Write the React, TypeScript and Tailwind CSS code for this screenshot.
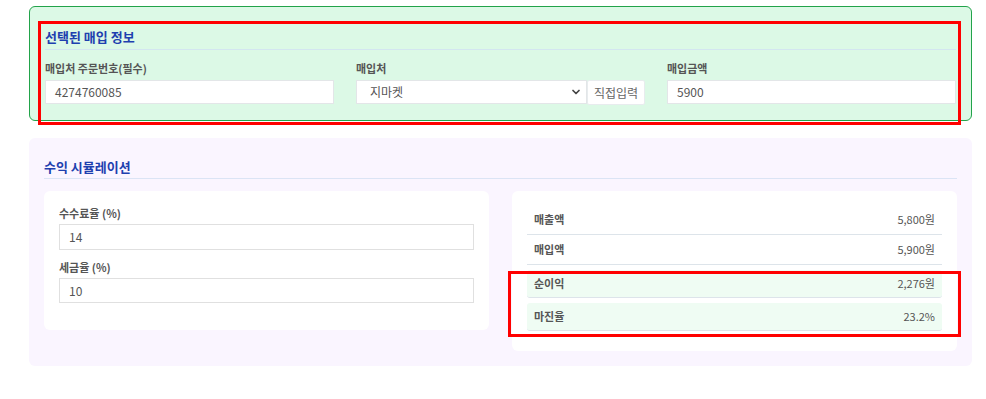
import React from 'react'

const font = { fontFamily: '"Noto Sans CJK KR", "Noto Sans", sans-serif' }

const Field = ({ label, value }: { label: string; value: string }) => (
  <div className="flex flex-col">
    <label className="text-[11px] font-bold text-[#555] leading-[14px] mb-[5px]">{label}</label>
    <div className="h-[24px] bg-white border border-[#e3e6e8] flex items-center pl-[9px] text-[12px] text-[#555]">
      {value}
    </div>
  </div>
)

const Row = ({ label, value, hl }: { label: string; value: string; hl?: boolean }) => (
  <div
    className={
      hl
        ? 'mt-[5px] h-[28px] flex items-center justify-between px-[7px] bg-[#effcf3] rounded-[3px] border-b border-[#dde4ea]'
        : 'h-[30px] flex items-center justify-between px-[7px] border-b border-[#dde4ea]'
    }
  >
    <span className="text-[11px] font-bold text-[#555]">{label}</span>
    <span className="text-[11px] text-[#555]">{value}</span>
  </div>
)

export default function App() {
  return (
    <div className="relative bg-white w-[986px] h-[399px]" style={font}>
      <div className="pt-[6px] pl-[29px] w-[972px]">
        {/* 선택된 매입 정보 */}
        <div className="bg-[#dcf9e6] border border-[#22a34a] rounded-[6px] px-[15px] pt-[20px] pb-[16px]">
          <h2 className="text-[13px] font-bold text-[#1e40af] leading-[20px] pb-[2px] border-b border-[#d3e6f0]">
            선택된 매입 정보
          </h2>
          <div className="grid grid-cols-3 gap-[22px] mt-[11px]">
            <Field label="매입처 주문번호(필수)" value="4274760085" />
            <div className="flex flex-col">
              <label className="text-[11px] font-bold text-[#555] leading-[14px] mb-[5px]">매입처</label>
              <div className="flex h-[24px]">
                <div className="flex-1 bg-white border border-[#e3e6e8] flex items-center justify-between pl-[13px] pr-[4px] text-[12px] text-[#555]">
                  <span>지마켓</span>
                  <svg width="12" height="12" viewBox="0 0 24 24" fill="none" stroke="#444" strokeWidth="3.5" strokeLinecap="round" strokeLinejoin="round">
                    <path d="M6 9l6 6 6-6" />
                  </svg>
                </div>
                <button className="w-[58px] h-[25px] bg-white border border-[#e8ecee] rounded-[2px] text-[12px] text-[#666]">
                  직접입력
                </button>
              </div>
            </div>
            <Field label="매입금액" value="5900" />
          </div>
        </div>

        {/* 수익 시뮬레이션 */}
        <div className="mt-[17px] bg-[#faf5ff] rounded-[6px] px-[15px] pt-[20px] pb-[15px]">
          <h2 className="text-[13px] font-bold text-[#1e40af] leading-[18px] pb-[2px] border-b border-[#dbe4f5]">
            수익 시뮬레이션
          </h2>
          <div className="grid grid-cols-2 gap-[23px] mt-[12px] items-start">
            <div className="bg-white rounded-[6px] px-[15px] pt-[15px] pb-[27px]">
              <label className="block text-[11px] font-bold text-[#555] leading-[14px] mb-[4px]">수수료율 (%)</label>
              <div className="h-[26px] border border-[#e0e0e0] flex items-center pl-[9px] text-[12px] text-[#555]">14</div>
              <label className="block text-[11px] font-bold text-[#555] leading-[14px] mt-[10px] mb-[4px]">세금율 (%)</label>
              <div className="h-[25px] border border-[#e0e0e0] flex items-center pl-[9px] text-[12px] text-[#555]">10</div>
            </div>
            <div className="bg-white rounded-[6px] px-[15px] pt-[14px] pb-[20px]">
              <Row label="매출액" value="5,800원" />
              <Row label="매입액" value="5,900원" />
              <Row label="순이익" value="2,276원" hl />
              <Row label="마진율" value="23.2%" hl />
            </div>
          </div>
        </div>
      </div>

      {/* annotation boxes */}
      <div className="absolute left-[38px] top-[21px] w-[923px] h-[104px] border-[3px] border-[#ff0000] pointer-events-none" />
      <div className="absolute left-[508px] top-[271px] w-[453px] h-[66px] border-[3px] border-[#ff0000] pointer-events-none" />
    </div>
  )
}
